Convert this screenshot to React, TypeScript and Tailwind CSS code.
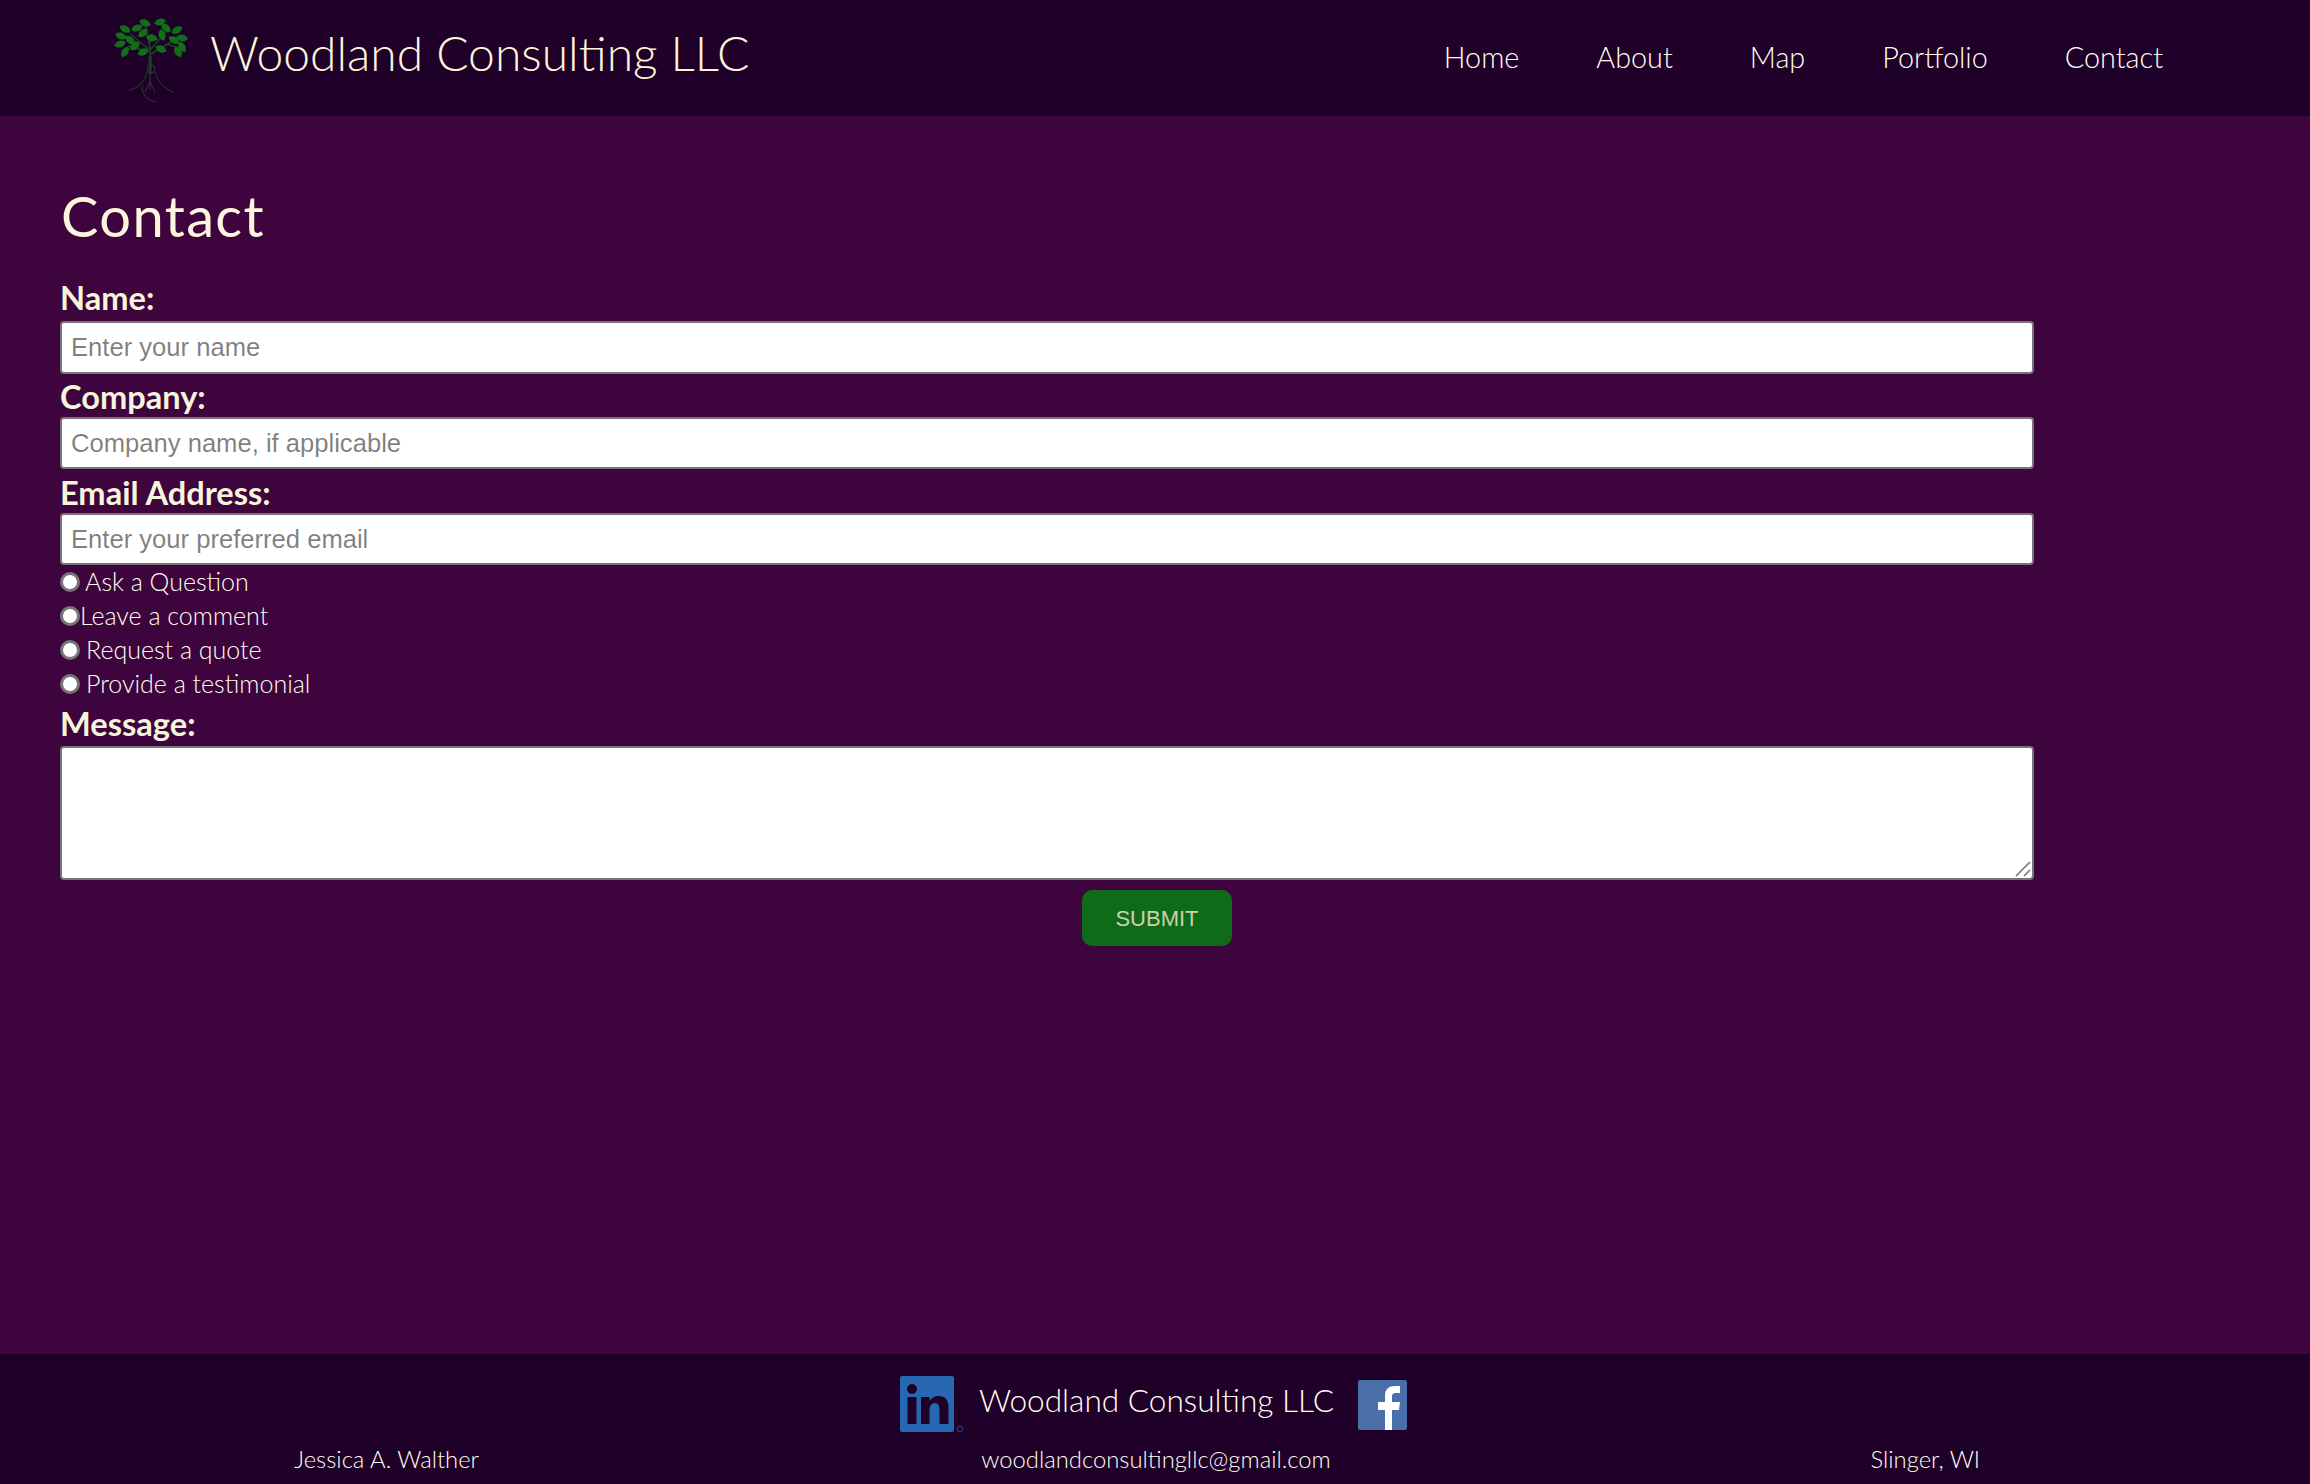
const leaves: [number, number, number][] = [
  [25, 21, 30], [37, 20, -20], [45, 15, 25], [60, 14, -15], [66, 20, 40], [77, 22, -30],
  [21, 28, 20], [43, 25, -40], [62, 27, 75], [82, 30, 10], [20, 36, -20], [30, 32, 40],
  [52, 30, 10], [74, 32, 30], [35, 38, -40], [25, 44, -60], [43, 44, -25], [61, 41, 25],
  [82, 39, 60], [78, 44, 60],
]

function TreeLogo() {
  return (
    <svg viewBox="0 0 100 100" className="w-[100px] h-[100px] shrink-0">
      <g stroke="#17451d" strokeWidth="1.6" fill="none">
        <path d="M51 60 L50 40 L45 16 M50 42 L30 26 M50 42 L68 22 M50 44 L28 38 M51 46 L78 30 M50 35 L52 26 M36 33 L26 44 M66 36 L80 40" />
        <path d="M50 48 L50 66" strokeWidth="2.8" />
      </g>
      <g fill="#116d18">
        {leaves.map(([x, y, r]) => (
          <path
            key={`${x}-${y}`}
            d="M-6 0 C-3 -4.500 3 -4.500 6 0 C3 4.500 -3 4.500 -6 0Z"
            transform={`translate(${x} ${y}) rotate(${r})`}
          />
        ))}
      </g>
      <g stroke="#27402c" strokeWidth="1" fill="none">
        <circle cx="51" cy="61" r="4" />
        <path d="M47 64 C45 72 40 80 29 82 M55 64 C57 72 62 79 74 85 M50 66 L50 82 M50 74 L45 84 M50 74 L55 84 M42 78 C42 88 48 92 56 94" />
      </g>
    </svg>
  )
}

function LinkedInLogo() {
  return (
    <svg viewBox="0 0 64 58" className="w-[64px] h-[58px] shrink-0">
      <rect x="0" y="0" width="54" height="56" rx="2" fill="#2867b2" />
      <circle cx="12" cy="13" r="5" fill="#1f0029" />
      <rect x="7.5" y="21" width="9" height="27" fill="#1f0029" />
      <path d="M21 21h8.500v4c2-3 5-5 9-5 8 0 10 5 10 12v16h-9V34c0-4-1-7-4.500-7s-5.500 3-5.500 7v14h-8.500z" fill="#1f0029" />
      <circle cx="60" cy="53" r="2.800" fill="none" stroke="#1f4a8c" strokeWidth="1" />
    </svg>
  )
}

function FacebookLogo() {
  return (
    <svg viewBox="0 0 49 50" className="w-[49px] h-[50px] shrink-0">
      <rect width="49" height="50" rx="2" fill="#4a6ea9" />
      <path d="M27 50V30h-7v-8h7v-6c0-7 4-10 10-10h5v7h-4c-3 0-4 1-4 4v5h8l-1 8h-7v20z" fill="#ffffff" />
    </svg>
  )
}

function Field({ label, placeholder, className }: { label: string; placeholder: string; className: string }) {
  return (
    <div className="flex flex-col">
      <label className="text-[32.6px] leading-[40px] font-bold text-[#f5f5dc]">{label}</label>
      <input
        type="text"
        placeholder={placeholder}
        className={`w-[1974px] px-[9px] rounded-[4px] border-2 border-[#767676] bg-white text-[25.6px] font-['Liberation_Sans',Arial,sans-serif] ${className}`}
      />
    </div>
  )
}

export default function App() {
  const navItems = ['Home', 'About', 'Map', 'Portfolio', 'Contact']
  const topics = [
    { label: 'Ask a Question', gap: 'ml-[5px]' },
    { label: 'Leave a comment', gap: 'ml-0' },
    { label: 'Request a quote', gap: 'ml-[6px]' },
    { label: 'Provide a testimonial', gap: 'ml-[6px]' },
  ]

  return (
    <div className="min-h-screen flex flex-col bg-[#3d043d] font-['Lato',sans-serif]">
      <header className="h-[116px] shrink-0 flex items-center justify-between bg-[#1f0029] pl-[100px] pr-[147px]">
        <div className="flex items-center">
          <TreeLogo />
          <span className="ml-[10px] mb-[10px] text-[48px] font-light text-[#fdf5dc] whitespace-nowrap">
            Woodland Consulting LLC
          </span>
        </div>
        <nav className="flex items-center gap-[77px]">
          {navItems.map((item) => (
            <a key={item} href="#" className="text-[28.8px] font-light text-[#fffff0]">
              {item}
            </a>
          ))}
        </nav>
      </header>

      <main className="flex-1 pl-[60px] pt-[66px]">
        <h1 className="ml-[1px] text-[56px] leading-[68px] font-normal tracking-[1.4px] text-[#fdf5dc]">Contact</h1>
        <form className="mt-[28px] flex flex-col w-[2194px]">
          <Field label="Name:" placeholder="Enter your name" className="mt-[3px] h-[53px]" />
          <div className="mt-[3px]">
            <Field label="Company:" placeholder="Company name, if applicable" className="h-[52px]" />
          </div>
          <div className="mt-[4px]">
            <Field label="Email Address:" placeholder="Enter your preferred email" className="h-[52px]" />
          </div>
          <div className="flex flex-col">
            {topics.map((topic) => (
              <label key={topic.label} className="h-[34px] flex items-center text-[25px] font-light text-[#fffff0]">
                <input
                  type="radio"
                  name="topic"
                  className="appearance-none w-5 h-5 m-0 rounded-full border-[3px] border-[#767676] bg-white"
                />
                <span className={topic.gap}>{topic.label}</span>
              </label>
            ))}
          </div>
          <div className="mt-[1px] flex flex-col">
            <label className="text-[32.6px] leading-[44px] font-bold text-[#f5f5dc]">Message:</label>
            <div className="relative w-[1974px] h-[134px]">
              <textarea className="block w-full h-full resize-none rounded-[4px] border-2 border-[#767676] bg-white" />
              <svg viewBox="0 0 16 16" className="absolute right-[3px] bottom-[3px] w-4 h-4">
                <path d="M1 15 L15 1 M9 15 L15 9" stroke="#777777" strokeWidth="1.6" fill="none" />
              </svg>
            </div>
          </div>
          <button
            type="button"
            className="mt-[10px] self-center w-[150px] h-[56px] rounded-[10px] bg-[#0f6b17] text-[22px] text-[#c9d1b0] font-['Liberation_Sans',Arial,sans-serif]"
          >
            SUBMIT
          </button>
        </form>
      </main>

      <footer className="h-[130px] shrink-0 bg-[#1f0029] text-[#fffff0] font-light">
        <div className="pt-[22px] flex justify-center items-center h-[80px] pr-[3px]">
          <LinkedInLogo />
          <span className="ml-[15px] mb-[8px] text-[31.6px] whitespace-nowrap">Woodland Consulting LLC</span>
          <span className="ml-[24px]">
            <FacebookLogo />
          </span>
        </div>
        <div className="mt-[10px] pl-[2px] grid grid-cols-3 text-center text-[23.8px] leading-[30px]">
          <span>Jessica A. Walther</span>
          <span>woodlandconsultingllc@gmail.com</span>
          <span>Slinger, WI</span>
        </div>
      </footer>
    </div>
  )
}
